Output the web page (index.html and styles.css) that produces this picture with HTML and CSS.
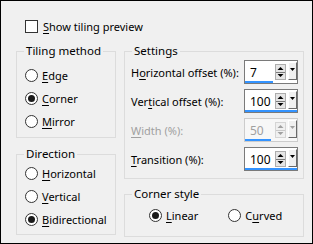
FILE: index.html
```html
<!DOCTYPE html>
<html>
<head>
<meta charset="utf-8">
<link rel="stylesheet" href="styles.css">
</head>
<body>
<div class="dialog">
  <div class="check-row"><span class="checkbox"></span><span class="check-text"><u>S</u>how tiling preview</span></div>
  <div class="columns">
    <div class="col-left">
      <fieldset class="group g-tiling">
        <legend>Tiling method</legend>
        <div class="radio-row"><span class="radio"></span><span><u>E</u>dge</span></div>
        <div class="radio-row"><span class="radio checked"></span><span><u>C</u>orner</span></div>
        <div class="radio-row"><span class="radio"></span><span><u>M</u>irror</span></div>
      </fieldset>
      <fieldset class="group g-direction">
        <legend>Direction</legend>
        <div class="radio-row"><span class="radio"></span><span><u>H</u>orizontal</span></div>
        <div class="radio-row"><span class="radio"></span><span><u>V</u>ertical</span></div>
        <div class="radio-row"><span class="radio checked"></span><span><u>B</u>idirectional</span></div>
      </fieldset>
    </div>
    <div class="col-right">
      <fieldset class="group g-settings">
        <legend>Settings</legend>
        <div class="field-row">
          <span class="field-label">H<u>o</u>rizontal offset (%):</span>
          <div class="spin">
            <div class="spin-main">
              <span class="spin-value">7</span>
              <span class="spin-arrows"><svg width="9" height="14" viewBox="0 0 9 14"><path d="M4.5 2 L7.5 5 L1.5 5 Z" fill="#000"/><path d="M0 7.5 H9" stroke="#7a7a7a"/><path d="M1.5 9 L7.5 9 L4.5 12 Z" fill="#000"/></svg></span>
              <span class="spin-drop"><svg width="5" height="3" viewBox="0 0 5 3"><path d="M0 0 H5 L2.5 3 Z" fill="#000"/></svg></span>
            </div>
            <div class="spin-track"><span class="spin-bar" style="width:28px"></span></div>
          </div>
        </div>
        <div class="field-row">
          <span class="field-label">Ver<u>t</u>ical offset (%):</span>
          <div class="spin">
            <div class="spin-main">
              <span class="spin-value">100</span>
              <span class="spin-arrows"><svg width="9" height="14" viewBox="0 0 9 14"><path d="M4.5 2 L7.5 5 L1.5 5 Z" fill="#000"/><path d="M0 7.5 H9" stroke="#7a7a7a"/><path d="M1.5 9 L7.5 9 L4.5 12 Z" fill="#000"/></svg></span>
              <span class="spin-drop"><svg width="5" height="3" viewBox="0 0 5 3"><path d="M0 0 H5 L2.5 3 Z" fill="#000"/></svg></span>
            </div>
            <div class="spin-track"><span class="spin-bar" style="width:100%"></span></div>
          </div>
        </div>
        <div class="field-row disabled">
          <span class="field-label"><u>W</u>idth (%):</span>
          <div class="spin">
            <div class="spin-main">
              <span class="spin-value">50</span>
              <span class="spin-arrows"><svg width="9" height="14" viewBox="0 0 9 14"><path d="M4.5 2 L7.5 5 L1.5 5 Z" fill="#a0a0a0"/><path d="M0 7.5 H9" stroke="#c8c8c8"/><path d="M1.5 9 L7.5 9 L4.5 12 Z" fill="#a0a0a0"/></svg></span>
              <span class="spin-drop"><svg width="5" height="3" viewBox="0 0 5 3"><path d="M0 0 H5 L2.5 3 Z" fill="#a0a0a0"/></svg></span>
            </div>
            <div class="spin-track"><span class="spin-bar" style="width:26px"></span></div>
          </div>
        </div>
        <div class="field-row">
          <span class="field-label"><u>T</u>ransition (%):</span>
          <div class="spin">
            <div class="spin-main">
              <span class="spin-value">100</span>
              <span class="spin-arrows"><svg width="9" height="14" viewBox="0 0 9 14"><path d="M4.5 2 L7.5 5 L1.5 5 Z" fill="#000"/><path d="M0 7.5 H9" stroke="#7a7a7a"/><path d="M1.5 9 L7.5 9 L4.5 12 Z" fill="#000"/></svg></span>
              <span class="spin-drop"><svg width="5" height="3" viewBox="0 0 5 3"><path d="M0 0 H5 L2.5 3 Z" fill="#000"/></svg></span>
            </div>
            <div class="spin-track"><span class="spin-bar" style="width:100%"></span></div>
          </div>
        </div>
      </fieldset>
      <fieldset class="group g-corner">
        <legend>Corner style</legend>
        <div class="corner-row">
          <div class="radio-row"><span class="radio checked"></span><span><u>L</u>inear</span></div>
          <div class="radio-row"><span class="radio"></span><span>C<u>u</u>rved</span></div>
        </div>
      </fieldset>
    </div>
  </div>
</div>
</body>
</html>
```

FILE: styles.css
```css
html, body {
  margin: 0;
  padding: 0;
  background: #f0f0f0;
}
.dialog {
  width: 313px;
  height: 244px;
  box-sizing: border-box;
  border: 1px solid #000;
  background: #f0f0f0;
  padding: 17px 8px 0 15px;
  font-family: "Noto Sans", "Open Sans", sans-serif;
  font-size: 11px;
  color: #000;
}
u {
  text-decoration-thickness: 1px;
  text-underline-offset: 2px;
}
.check-row {
  display: flex;
  align-items: center;
  height: 16px;
  margin-left: 9px;
}
.checkbox {
  width: 11px;
  height: 11px;
  border: 1px solid #333;
  background: #fff;
  margin-right: 5px;
}
.columns {
  display: flex;
  gap: 8px;
  margin-top: 10px;
}
.col-left {
  width: 100px;
  display: flex;
  flex-direction: column;
  gap: 9px;
}
.col-right {
  width: 180px;
  display: flex;
  flex-direction: column;
  gap: 8px;
}
.group {
  margin: 0;
  min-width: 0;
  border: 1px solid #dcdcdc;
  padding: 0 6px;
}
.group legend {
  padding: 0 2px;
  margin-left: 1px;
  line-height: 14px;
  font-size: 11.5px;
}
.g-tiling {
  padding-top: 6px;
  padding-bottom: 4px;
}
.g-direction {
  padding-top: 1px;
  padding-bottom: 3px;
}
.radio-row {
  display: flex;
  align-items: center;
  height: 23px;
  padding-left: 2px;
}
.radio {
  width: 11px;
  height: 11px;
  border: 1px solid #333;
  border-radius: 50%;
  background: #fff;
  margin-right: 4px;
  display: flex;
  align-items: center;
  justify-content: center;
}
.radio.checked::after {
  content: "";
  width: 7px;
  height: 7px;
  border-radius: 50%;
  background: #1a1a1a;
}
.g-settings {
  padding: 2px 5px 2px 6px;
}
.field-row {
  display: flex;
  justify-content: space-between;
  align-items: flex-start;
  height: 29px;
}
.field-label {
  padding-top: 6px;
  line-height: 14px;
}
.disabled .field-label,
.disabled .spin-value {
  color: #a0a0a0;
}
.spin {
  width: 54px;
  height: 24px;
  box-sizing: border-box;
  border: 1px solid #7a7a7a;
  background: #fff;
  display: flex;
  flex-direction: column;
}
.disabled .spin {
  border-color: #cccccc;
  background: #f7f7f7;
}
.spin-main {
  flex: 1;
  display: flex;
  align-items: flex-start;
}
.spin-value {
  flex: 1;
  padding: 5px 0 0 5px;
  line-height: 14px;
  font-size: 12px;
}
.spin-arrows {
  margin-top: 3px;
  width: 9px;
  height: 14px;
  border: 1px solid #adadad;
  background: #e5e5e5;
  display: flex;
}
.disabled .spin-arrows {
  border-color: #d5d5d5;
  background: #f0f0f0;
}
.spin-drop {
  margin: 1px 0 0 2px;
  width: 9px;
  height: 18px;
  box-sizing: border-box;
  border-top: 1px solid #fff;
  border-left: 1px solid #fff;
  border-right: 1px solid #696969;
  border-bottom: 1px solid #696969;
  background: #f0f0f0;
  display: flex;
  justify-content: center;
  padding-top: 5px;
}
.spin-drop svg {
  flex: none;
}
.spin-track {
  height: 2px;
}
.spin-bar {
  display: block;
  height: 2px;
  background: #3393ff;
}
.g-corner {
  padding: 3px 6px 9px 6px;
}
.corner-row {
  display: flex;
  gap: 30px;
  padding-left: 18px;
}
.corner-row .radio-row {
  padding-left: 0;
}
```
